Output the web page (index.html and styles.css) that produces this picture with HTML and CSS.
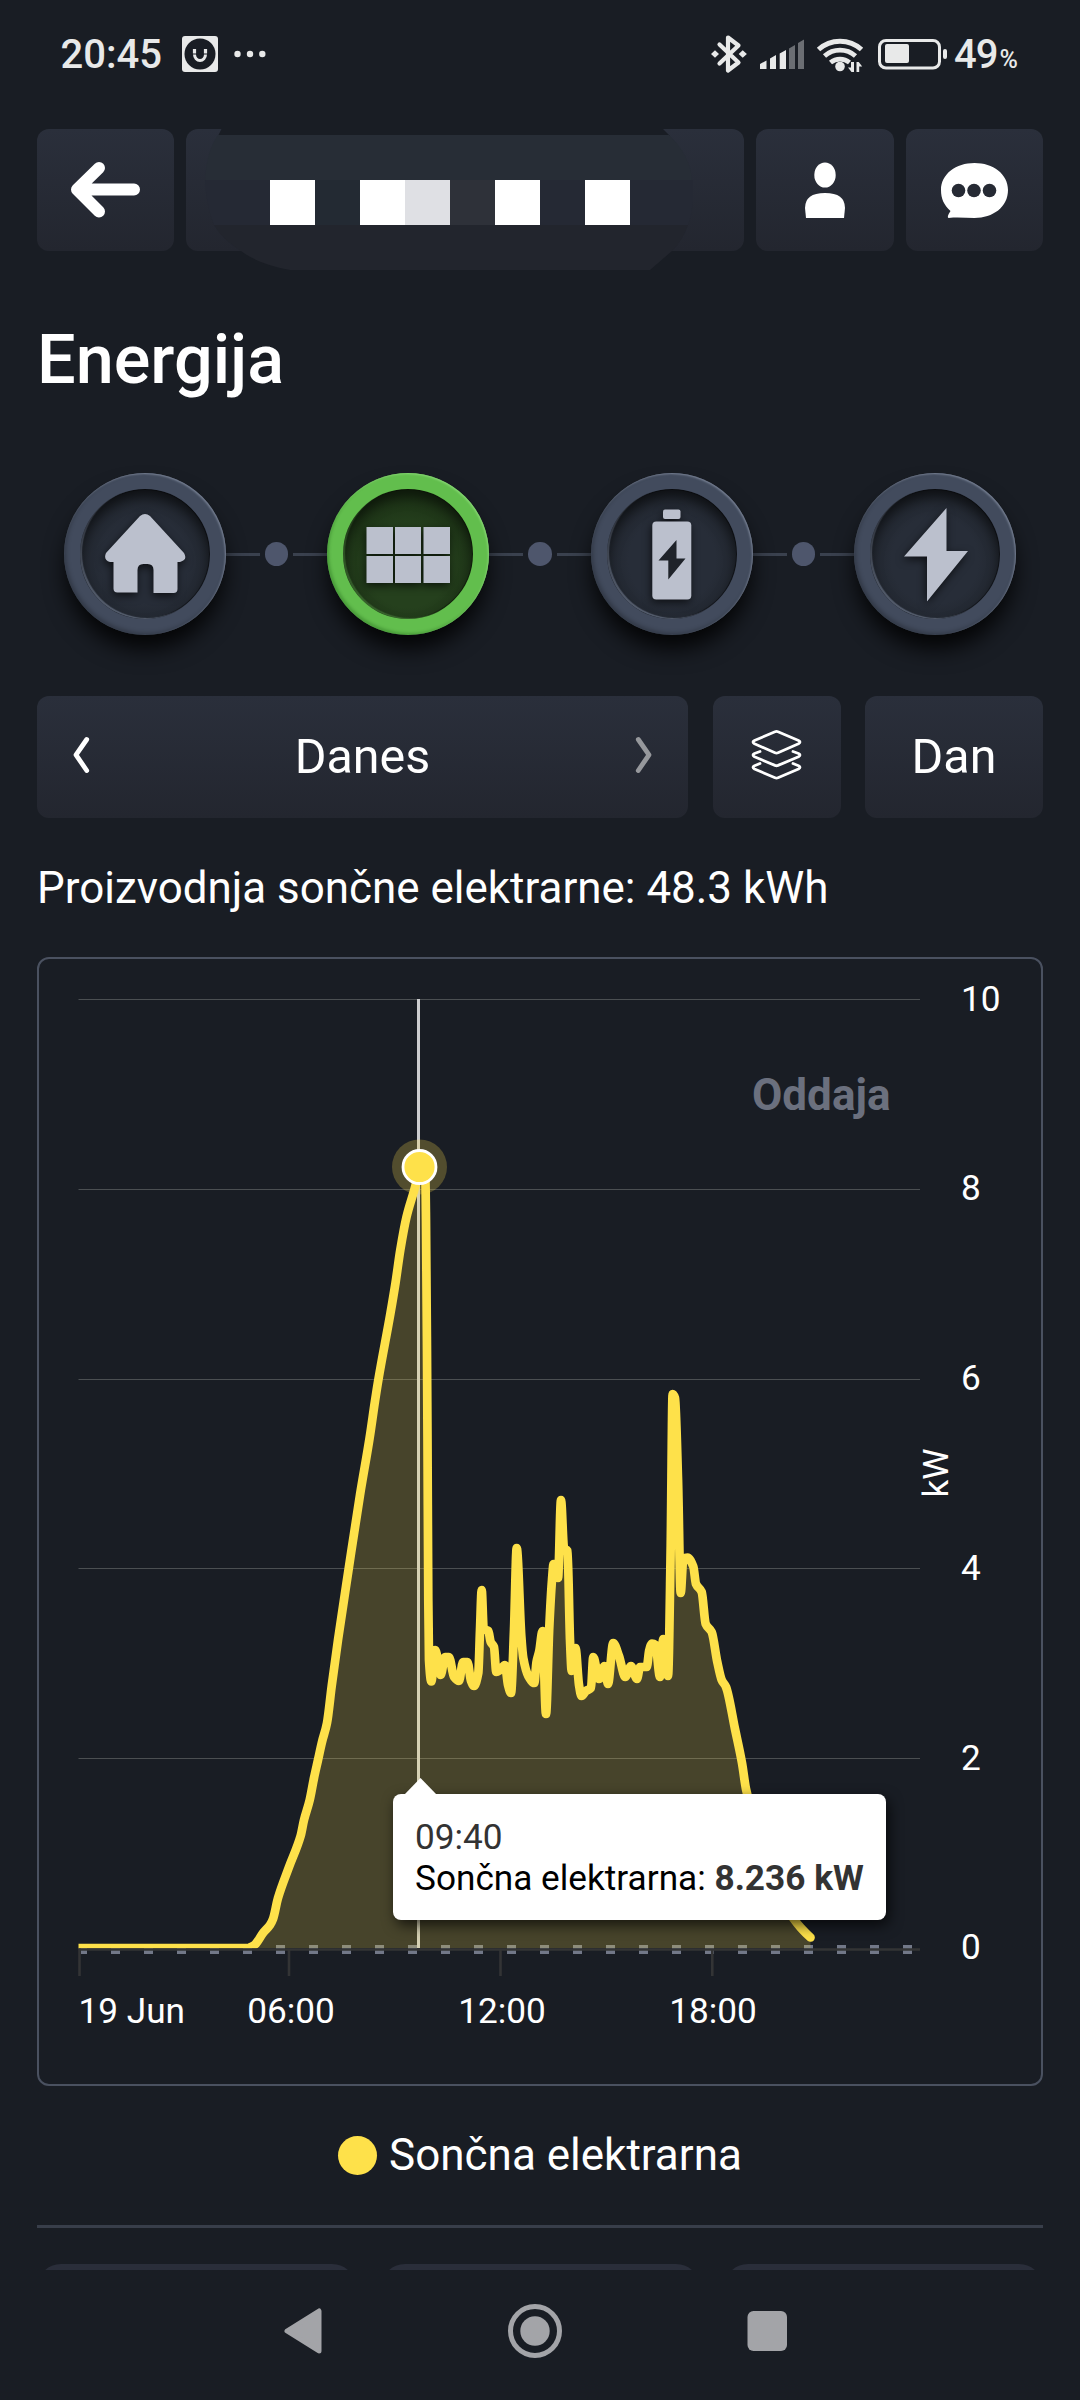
FILE: index.html
```html
<!DOCTYPE html>
<html lang="sl">
<head>
<meta charset="utf-8">
<title>Energija</title>
<link rel="stylesheet" href="styles.css">
</head>
<body>
<div class="screen">
  <header class="status">
    <span class="clock">20:45</span>
    <svg class="smile" width="36" height="36" viewBox="0 0 36 36">
      <rect width="36" height="36" rx="3" fill="#e8e9e9"/>
      <circle cx="18" cy="18" r="15.5" fill="#191d24"/>
      <path d="M12.5 13v4.500M23.500 13v4.500" stroke="#e8e9e9" stroke-width="3.200"/>
      <path d="M12.500 18.500a5.500 6 0 0 0 11 0" fill="none" stroke="#e8e9e9" stroke-width="3"/>
    </svg>
    <svg class="more" width="32" height="8" viewBox="0 0 32 8" fill="#e8e9e9">
      <circle cx="3.500" cy="4" r="3.200"/><circle cx="16" cy="4" r="3.200"/><circle cx="28.300" cy="4" r="3.200"/>
    </svg>
    <svg class="indicators" width="238" height="40" viewBox="710 34 238 40">
      <g stroke="#e8e9e9" fill="none">
        <path d="M719.500 44.500L738.500 62.500L728 70.500V37.500L738.500 45.500L719.500 63.500" stroke-width="4.200" stroke-linejoin="round" stroke-linecap="round"/>
        <path d="M818.500 49.500a32 32 0 0 1 43 0" stroke-width="5"/>
        <path d="M824.500 56a23.500 23.500 0 0 1 31 0" stroke-width="4.800"/>
        <path d="M830.500 62.500a15 15 0 0 1 19 0" stroke-width="4.800"/>
        <rect x="879.500" y="40.500" width="60" height="27.500" rx="6.500" stroke-width="3"/>
      </g>
      <g fill="#e8e9e9">
        <path d="M711 54l4-3.800 4 3.800-4 3.800zM738.700 54l4-3.800 4.200 3.800-4.200 3.800z"/>
        <path d="M760 69v-5l6.500-3.500V69zM770 69V58.500l6-3.500v14zM779.700 69V53.500l6.300-3.500v19z"/>
        <path d="M789 69V48.500l6-3.500v24zM798 69V43l6-3.500V69z" fill="#6b6e73"/>
        <circle cx="840" cy="66.500" r="4.800"/>
        <path d="M854 62v10h-2.500l-3.500-4.500h3V62zM856.500 72V62h2.200l3.500 4.500h-3V72z"/>
        <rect x="885" y="44" width="24" height="19" rx="2"/>
        <rect x="943" y="49" width="4" height="10" rx="2"/>
      </g>
    </svg>
    <span class="charge">49<small>%</small></span>
  </header>

  <nav class="topbar">
    <button class="tile">
      <svg width="72" height="58" viewBox="70 161 72 58"><path d="M99 168L77 189.500L99 211.500M80 189.500H134" fill="none" stroke="#fff" stroke-width="12" stroke-linecap="round" stroke-linejoin="round"/></svg>
    </button>
    <div class="tile masked">
      <svg class="mask" width="558" height="142" viewBox="186 129 558 142">
        <path d="M222 128H662L670 136H218z" fill="#191d24"/>
        <path d="M218 135H669Q690 155 692 180H205Q207 150 218 135z" fill="#272d36"/>
        <path d="M205 180H693V202Q692 214 688 225H214Q206 205 205 180z" fill="#252934"/>
        <path d="M214 225H688Q683 240 672 251L650 270H290Q258 264 241 251Q222 239 214 225z" fill="#22252d"/>
        <path d="M315 180h45v45h-45z" fill="#232a33"/>
        <path d="M450 180h45v45h-45z" fill="#2e3139"/>
        <path d="M405 180h45v45h-45z" fill="#dfe0e4"/>
        <path d="M270 180h45v45h-45zM360 180h45v45h-45zM495 180h45v45h-45zM585 180h45v45h-45z" fill="#fff"/>
      </svg>
    </div>
    <button class="tile">
      <svg width="42" height="57" viewBox="804 161 42 57" fill="#fff"><ellipse cx="825" cy="174" rx="10.700" ry="12.600"/><path d="M806 217L805 207Q805 192 825 192T845 207L844 217z"/></svg>
    </button>
    <button class="tile">
      <svg width="69" height="57" viewBox="940 161 69 57"><path d="M974.500 162C993 162 1008 173 1008 189C1008 206 993 217 974.500 217C966 217 958 216 948.500 217Q946.500 216 950.500 210C944 204 941 198 941 189C941 173 956 162 974.500 162z" fill="#fff"/><g fill="#262a34"><circle cx="958.500" cy="189.500" r="6.800"/><circle cx="974" cy="189.500" r="6.800"/><circle cx="989.500" cy="189.500" r="6.800"/></g></svg>
    </button>
  </nav>

  <h1>Energija</h1>

  <div class="flow">
    <div class="node">
      <svg width="82" height="82" viewBox="104 509 82 82"><path d="M140 512q5-4 10 0l34 37q4 7-4 9h-2.500v27q0 4-4 4h-20V566q0-6-6-6h-4q-6 0-6 6v22.500h-20q-4 0-4-4V558H110q-7-2-4-9z" fill="#bbc0cd"/></svg>
    </div>
    <div class="link"><i></i><b></b><i></i></div>
    <div class="node active">
      <svg width="84" height="57" viewBox="366 525 84 57" fill="#bbc0cd"><path d="M366.500 526h26.500v27h-26.500zM395 526h26v27h-26zM423.500 526H450v27h-26.500zM366.500 555h26.500v27h-26.500zM395 555h26v27h-26zM423.500 555H450v27h-26.500z"/></svg>
    </div>
    <div class="link"><i></i><b></b><i></i></div>
    <div class="node">
      <svg width="42" height="91" viewBox="651.500 508.500 42 91"><rect x="663.500" y="509" width="17.500" height="9.500" rx="2" fill="#bbc0cd"/><rect x="652.800" y="521" width="39" height="78" rx="4" fill="#bbc0cd"/><path d="M677 539.500L659 560h9.800v19L686 558h-9z" fill="#1f232a"/></svg>
    </div>
    <div class="link"><i></i><b></b><i></i></div>
    <div class="node">
      <svg class="bolt" width="64" height="94" viewBox="904 507.500 64 94"><path d="M946.500 508L904 556.500h23V601.500L968 551H946.500z" fill="#bbc0cd"/></svg>
    </div>
  </div>

  <div class="controls">
    <div class="tile period">
      <svg width="18" height="38" viewBox="72 736 18 38"><path d="M86.700 739.500L76 754.800L86.700 770.500" fill="none" stroke="#fff" stroke-width="4.800" stroke-linecap="round" stroke-linejoin="round"/></svg>
      <span>Danes</span>
      <svg width="18" height="38" viewBox="635 736 18 38"><path d="M638.300 739.500L649 754.800L638.300 770.500" fill="none" stroke="#96989c" stroke-width="4.800" stroke-linecap="round" stroke-linejoin="round"/></svg>
    </div>
    <button class="tile layers">
      <svg width="52" height="52" viewBox="751 729 52 52" fill="none" stroke="#fff" stroke-width="2.800" stroke-linejoin="round" stroke-linecap="round"><path d="M775 731.800Q776.500 730.800 778 731.800L798.500 740.500Q801.500 742 798.500 743.800L778 752.800Q776.500 753.500 775 752.800L754.500 743.800Q751.500 742 754.500 740.500z"/><path d="M760 751.500l-5.500 2q-3 1.500 0 3.300L775 765.400q1.500.7 3 0l20.500-8.600q3-1.800 0-3.300l-5.500-2M760 763.500l-5.500 2.200q-3 1.500 0 3.300L775 777.700q1.500.7 3 0l20.500-8.700q3-1.800 0-3.300l-5.500-2.200"/></svg>
    </button>
    <button class="tile">Dan</button>
  </div>

  <p class="summary">Proizvodnja sončne elektrarne: 48.3 kWh</p>

  <section class="chart">
    <svg width="1002" height="1125" viewBox="39 959 1002 1125">
      <defs><clipPath id="plot"><rect x="78.500" y="995" width="842" height="953.500"/></clipPath></defs>
      <path d="M78.500 999.500H920M78.500 1189.500H920M78.500 1379.500H920M78.500 1568.500H920M78.500 1758.500H920" stroke="#4b4f52" stroke-width="1"/>
      <path d="M81 1949.500H87M111 1949.500H920" class="base-dash" stroke="#727888" stroke-width="9" fill="none"/>
      <path d="M418.500 999V1948" stroke="#cccdcf" stroke-width="3"/>
      <g clip-path="url(#plot)">
        <path id="area" fill="#fee14a" fill-opacity=".2"/>
        <path id="line" fill="none" stroke="#fee14a" stroke-width="8.700" stroke-linejoin="round" stroke-linecap="round"/>
      </g>
      <path d="M78.500 1949.500H920M79.500 1949V1976M289 1949V1976M500.500 1949V1976M712.300 1949V1976" stroke="#333435" stroke-width="2.600"/>
      <circle cx="419.500" cy="1167" r="27.500" fill="#fee14a" fill-opacity=".25"/>
      <circle cx="419.500" cy="1167" r="16.500" fill="#fee14a" stroke="#fff" stroke-width="2.800"/>
      <g class="labels">
        <text x="961" y="1011">10</text><text x="961" y="1200">8</text><text x="961" y="1390">6</text>
        <text x="961" y="1580">4</text><text x="961" y="1770">2</text><text x="961" y="1959">0</text>
        <text x="78.500" y="2023">19 Jun</text>
        <g text-anchor="middle"><text x="291" y="2023">06:00</text><text x="502" y="2023">12:00</text><text x="713" y="2023">18:00</text>
        <text transform="translate(948 1473) rotate(-90)">kW</text></g>
        <text class="export" x="752" y="1110">Oddaja</text>
      </g>
    </svg>
    <div class="tooltip">
      <div class="time">09:40</div>
      <div>Sončna elektrarna: <b>8.236 kW</b></div>
    </div>
  </section>

  <div class="legend"><i></i><span>Sončna elektrarna</span></div>
  <hr>
  <div class="tabs"><div></div><div></div><div></div></div>

  <footer class="sysnav">
    <svg width="504" height="56" viewBox="284 2303 504 56" fill="#a3a4a8">
      <path d="M287 2331L319 2311V2351z" stroke="#a3a4a8" stroke-width="5" stroke-linejoin="round"/>
      <circle cx="535" cy="2331" r="24.500" fill="none" stroke="#a3a4a8" stroke-width="5"/>
      <circle cx="535" cy="2331" r="14.700"/>
      <rect x="747.500" y="2311" width="39.500" height="40" rx="6"/>
    </svg>
  </footer>
</div>
<script src="chart.js"></script>
</body>
</html>
```
FILE: styles.css
```css
* { box-sizing: border-box; }
body { margin: 0; background: #191d24; color: #fff; font-family: Roboto, sans-serif; }
.screen { width: 1080px; height: 2400px; overflow: hidden; display: flex; flex-direction: column; padding: 0 37px; }
svg { display: block; flex: none; }
button { border: 0; padding: 0; color: inherit; font: inherit; }

.status { height: 108px; display: flex; align-items: center; padding: 0 0 0 23.5px; color: #e8e9e9; font-size: 40px; font-weight: 500; }
.clock { width: 121.5px; }
.smile { margin-right: 16px; }
.indicators { margin-left: auto; }
.charge { width: 95px; padding-left: 6px; letter-spacing: -1px; white-space: nowrap; }
.charge small { font-size: 25px; margin-left: 2px; font-weight: 500; }

.topbar { margin-top: 21px; display: grid; grid-template-columns: 137px 558px 138px 137px; gap: 12px; height: 122px; }
.tile { background: linear-gradient(#2a2f3b, #23262f); border-radius: 12px; display: flex; align-items: center; justify-content: center; font-size: 48.4px; line-height: 56px; }
.masked { position: relative; }
.mask { position: absolute; left: 0; top: 0; }

h1 { margin: 69px 0 0; font-size: 68.4px; line-height: 80px; font-weight: 500; }

.flow { margin: 73px 27px 0 27px; height: 162px; display: flex; align-items: center; }
.node { position: relative; width: 162px; height: 162px; flex: none; border-radius: 50%; border: 16px solid #424b5d; background: radial-gradient(circle at 50% 55%, #272d38 0 45%, #20252d 72%); display: flex; align-items: center; justify-content: center; box-shadow: 0 16px 22px -2px rgba(0,0,0,.85), inset 0 8px 12px rgba(0,0,0,.55), inset 2px -1px 1px #5b6475, inset 0 0 0 1px #15181e; }
.node::after { content: ""; position: absolute; inset: -16px; border-radius: 50%; box-shadow: inset -1px 1px 2px #778093, inset 2px -2px 4px rgba(0,0,0,.25); }
.node svg { filter: drop-shadow(-1px 3px 4px rgba(0,0,0,.65)); }
.node .bolt { transform: translate(1px, .5px); }
.active { border-color: #62be4d; background: radial-gradient(circle at 50% 60%, #25401d 0 40%, #1b3015 72%); box-shadow: 0 16px 22px -2px rgba(0,0,0,.85), inset 0 8px 12px rgba(0,0,0,.5), inset 2px -1px 1px #3d6a31, inset 0 0 0 1px #16260f; }
.active::after { box-shadow: inset -1px 1px 2px #86d573, inset 2px -2px 3px rgba(0,60,0,.25); }
.link { flex: 1; display: flex; align-items: center; justify-content: space-between; }
.link i { width: 34px; height: 3px; background: #3a414e; }
.link b { width: 23.5px; height: 23.5px; border-radius: 50%; background: #4e566c; }

.controls { margin-top: 61px; height: 122px; display: grid; grid-template-columns: 651px 128px 178px; gap: 24.5px; }
.period { justify-content: space-between; padding: 0 35px; }
.period svg { margin-bottom: 4px; }
.layers svg { margin-bottom: 4px; }

.summary { margin: 43px 0 0; font-size: 43.95px; line-height: 54px; }

.chart { position: relative; flex: none; margin-top: 42px; height: 1129px; border: 2px solid #4a5160; border-radius: 12px; }
.base-dash { stroke-dasharray: 9 24; }
.labels { font-size: 35.2px; fill: #fff; }
.labels .export { font-size: 44px; font-weight: 700; fill: #6b707e; }
.tooltip { position: absolute; left: 354px; top: 835px; width: 493px; height: 126px; padding: 23px 0 0 22px; background: #fff; border-radius: 8px; color: #000; font-size: 35.2px; line-height: 41px; white-space: nowrap; box-shadow: 3px 5px 14px rgba(0,0,0,.7); }
.tooltip::before { content: ""; position: absolute; left: 11px; top: -16px; width: 33px; height: 17px; background: #fff; clip-path: polygon(50% 0, 100% 100%, 0 100%); }
.tooltip .time, .tooltip b { color: #333; }

.legend { margin-top: 42px; height: 54px; display: flex; align-items: center; justify-content: center; gap: 12px; font-size: 44px; line-height: 54px; }
.legend i { width: 39px; height: 39px; border-radius: 50%; background: #fee14a; }
hr { width: 100%; height: 3px; margin: 43px 0 0; border: 0; background: #383e4a; flex: none; }
.tabs { margin-top: 36px; height: 6px; flex: none; overflow: hidden; display: grid; grid-template-columns: repeat(3, 1fr); gap: 24.5px; }
.tabs div { height: 122px; border-radius: 24px; background: #2a2e3a; }
.sysnav { height: 122px; display: flex; align-items: center; padding-left: 247px; flex: none; }
```
FILE: chart.js
```js
// Production curve in plot coordinates.
const points = [
  [79,1948],[248,1948],[252,1946.5],[255,1944.6],[263.4,1932.5],[270,1925],[273,1919],[278,1898],[289,1867],[300.6,1836],[304,1820],
  [309.7,1800],[314,1778],[318,1760],[322,1742],[327,1723],[331.7,1686],[338,1640],[348.5,1570],[360,1495],[369.6,1438],[375,1401],[378.5,1379],[390.5,1313],
  [395.5,1283],[400.3,1250],[406.5,1217],[415.6,1185],[419.5,1167],[425.4,1180],[426,1220],[427,1353],[427.5,1440],[428.3,1600],[429,1660],
  [431.3,1681.5],[435.3,1650],[440.7,1675],[445,1657],[449,1657],[454,1677],[459,1681],[463,1662],[467.5,1662],[471,1681],[474,1686],
  [478.3,1673],[480,1630],[481.7,1590],[483.7,1629],[488.3,1631],[490.7,1642],[494,1647],[496.3,1672],[500,1670],[505,1665],[508,1685],
  [511,1693],[514,1630],[516.7,1548],[521.3,1636],[523.3,1658],[528.3,1676],[534.3,1683],[536.5,1662],[539.3,1651],[542.5,1631],
  [546,1714],[549.3,1627],[552,1580],[553.6,1564],[558,1578],[561,1500],[564,1548],[567.5,1551],[570,1640],[571.7,1671],[575.5,1648],
  [579,1685],[581.5,1696],[586,1691],[591,1688],[593.3,1657],[599,1679],[604.5,1666],[608,1684],[613.2,1643],[619,1656],[625.3,1677],
  [631,1666],[637,1679],[640,1667],[646.7,1667],[649.3,1650],[652,1643.5],[655.5,1645],[660,1677],[663.3,1639],[668,1676],
  [670.7,1546],[672.6,1394],[675,1398],[678,1479],[680.7,1593],[683.3,1559],[687.5,1557.5],[693.3,1566.5],[696,1584],[701.7,1592],
  [705.7,1624],[711.7,1632],[717.3,1662],[721.7,1680],[726,1687],[735,1729],[742,1763],[746,1789],[760,1840],[775,1890],[793,1918],[801,1928],[810.5,1937.5]
];

// Monotone cubic interpolation: smooth joins without overshooting the samples.
const slopes = points.map((p, i) => {
  if (i === 0 || i === points.length - 1) return 0;
  const [x0, y0] = points[i - 1], [x1, y1] = p, [x2, y2] = points[i + 1];
  const a = (y1 - y0) / (x1 - x0), b = (y2 - y1) / (x2 - x1);
  return a * b <= 0 ? 0 : 2 * a * b / (a + b);
});
slopes[points.length - 1] = 0.9;

let d = 'M' + points[0].join(' ');
for (let i = 1; i < points.length; i++) {
  const [x0, y0] = points[i - 1], [x1, y1] = points[i], h = (x1 - x0) / 3;
  d += 'C' + [x0 + h, y0 + h * slopes[i - 1], x1 - h, y1 - h * slopes[i], x1, y1].map(v => v.toFixed(2)).join(' ');
}
document.getElementById('line').setAttribute('d', d);
document.getElementById('area').setAttribute('d', d + 'V1948H79Z');
```
